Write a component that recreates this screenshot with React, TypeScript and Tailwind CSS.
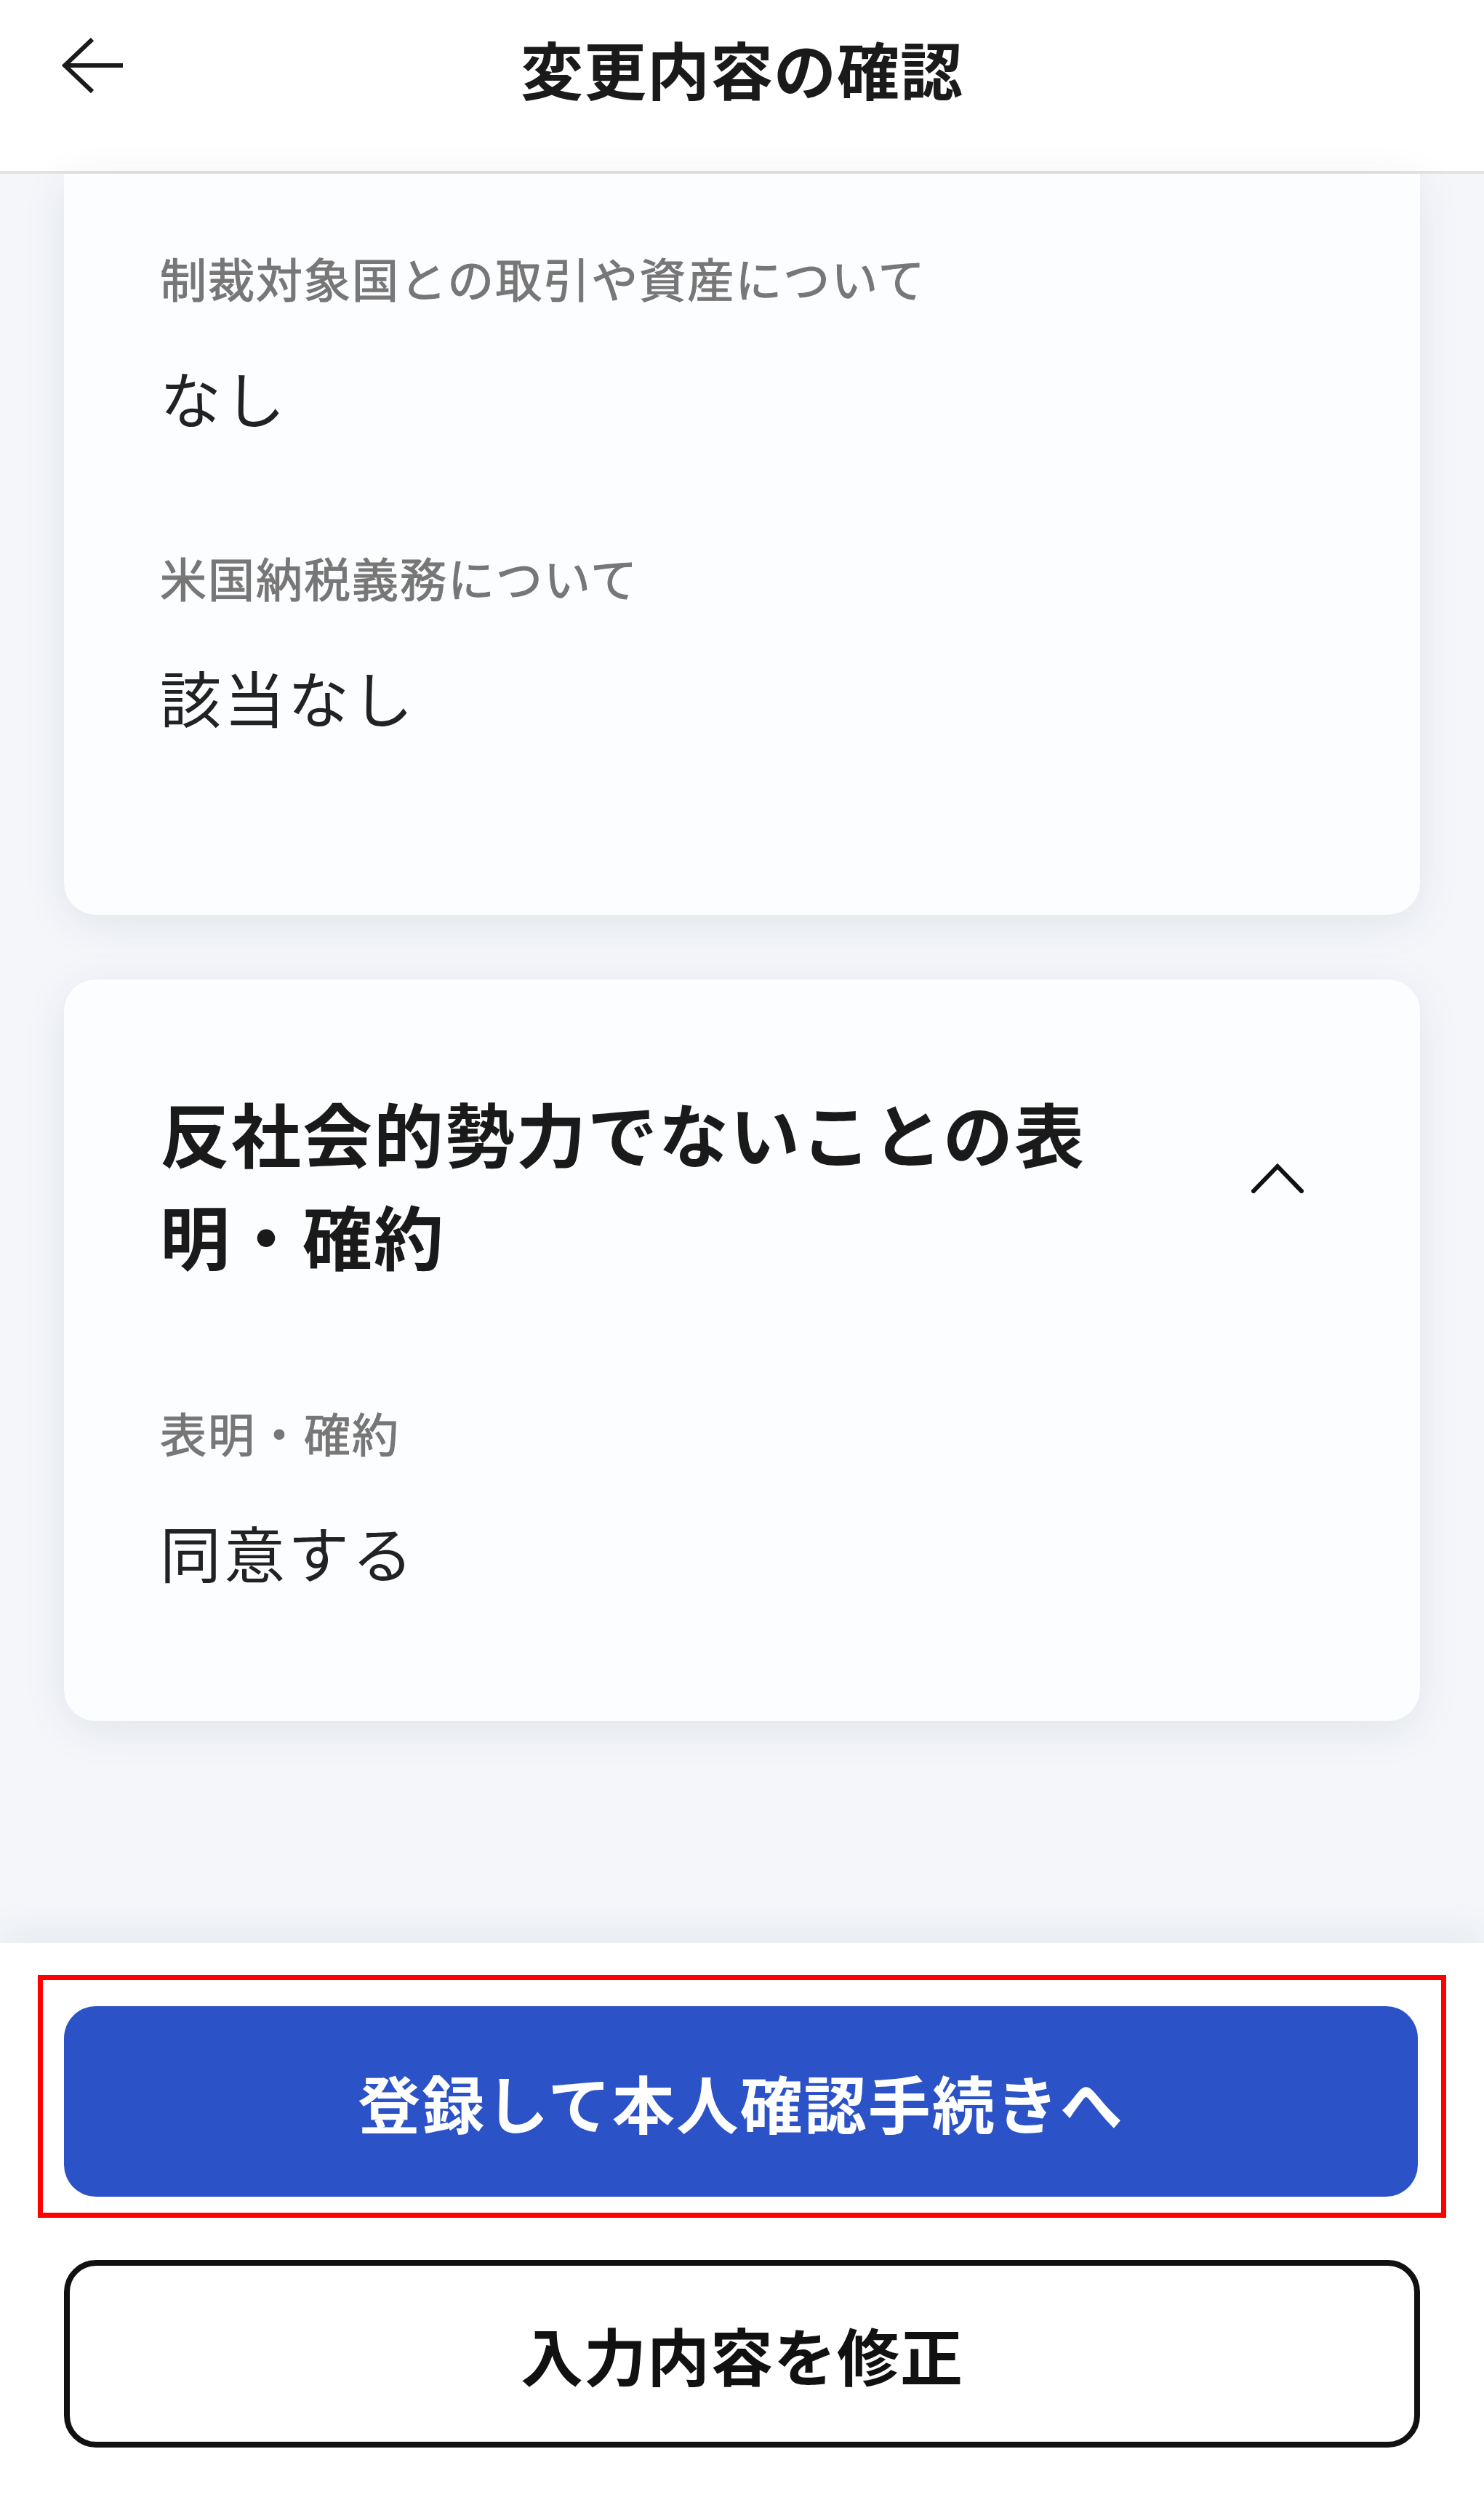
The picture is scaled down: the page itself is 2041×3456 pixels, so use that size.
import React from "react";

const FONT = { fontFamily: '"Noto Sans CJK JP", "Noto Sans", sans-serif' };

interface Item { label: string; value: string }

const Field = ({ label, value }: Item) => (
  <div>
    <p className="text-[64px] leading-[90px] tracking-[2px] text-[#777777] [-webkit-text-stroke:1.2px_#777777]">{label}</p>
    <p className="mt-[60px] text-[84px] leading-[120px] tracking-[4px] text-[#222222]">{value}</p>
  </div>
);

export default function App() {
  return (
    <div style={FONT} className="w-[2041px] h-[3456px] flex flex-col bg-white">
      {/* header */}
      <header className="h-[239px] shrink-0 grid grid-cols-[1fr_auto_1fr] items-start bg-white border-b-4 border-[#e3e3e3]">
        <div className="pl-[85px] pt-[51px]">
          <svg width="86" height="78" viewBox="0 0 86 78" fill="none" stroke="#1a1a1a" strokeWidth="6" strokeLinecap="butt" strokeLinejoin="miter">
            <polyline points="42,3 4,39 42,75" />
            <line x1="4" y1="39" x2="84" y2="39" />
          </svg>
        </div>
        <h1 className="pt-[51px] text-[86px] leading-none font-bold tracking-[1px] text-[#1a1a1a]">変更内容の確認</h1>
        <div />
      </header>

      {/* content */}
      <main className="flex-1 bg-[#f4f6fa] px-[88px]">
        <section className="bg-[#fcfdfe] rounded-b-[44px] shadow-[0_12px_60px_rgba(40,50,90,0.09)] pl-[132px] pt-[97px] pb-[240px]">
          <Field label="制裁対象国との取引や資産について" value="なし" />
          <div className="mt-[142px]">
            <Field label="米国納税義務について" value="該当なし" />
          </div>
        </section>

        <section className="mt-[89px] bg-[#fcfdfe] rounded-[44px] shadow-[0_12px_60px_rgba(40,50,90,0.09)] pl-[132px] pr-[160px] pt-[139px] pb-[173px]">
          <div className="flex items-center justify-between">
            <h2 className="w-[1320px] text-[96px] leading-[141px] tracking-[2px] font-bold text-[#1a1a1a]">
              反社会的勢力でないことの表明・確約
            </h2>
            <svg width="72" height="42" viewBox="0 0 72 42" fill="none" stroke="#111111" strokeWidth="6" strokeLinecap="square" className="mb-[14px]">
              <polyline points="3,39 36,5 69,39" />
            </svg>
          </div>
          <div className="mt-[156px]">
            <Field label="表明・確約" value="同意する" />
          </div>
        </section>
      </main>

      {/* footer */}
      <footer className="shrink-0 bg-white pt-[44px] pb-[90px] shadow-[0_-24px_40px_rgba(40,50,90,0.05)]">
        <div className="mx-[52px] border-[7px] border-[#ff0000] pl-[29px] pr-[32px] pt-[36px] pb-[22px]">
          <button className="w-full h-[262px] rounded-[44px] bg-[#2b52c6] text-white text-[86px] font-bold tracking-[2px]">
            登録して本人確認手続きへ
          </button>
        </div>
        <div className="mx-[88px] mt-[58px]">
          <button className="w-full h-[258px] rounded-[44px] border-[8px] border-[#111111] bg-white text-[#111111] text-[86px] font-bold tracking-[1px]">
            入力内容を修正
          </button>
        </div>
      </footer>
    </div>
  );
}
